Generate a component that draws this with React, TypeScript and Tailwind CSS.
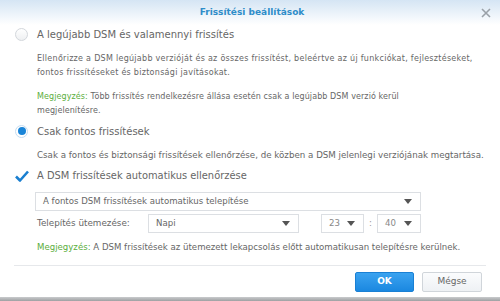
import { useState } from "react";

function Caret() {
    return (
        <svg width="8" height="5" viewBox="0 0 8 5" className="shrink-0">
            <path d="M0 0 L8 0 L4 5 Z" fill="#555" />
        </svg>
    );
}

function Select({ value, className }: { value: string; className: string }) {
    return (
        <div className={`h-[19px] flex items-center justify-between border border-[#dcdfe3] bg-white pl-[7px] pr-[8px] text-[8.6px] ${className}`}>
            <span>{value}</span>
            <Caret />
        </div>
    );
}

export default function App() {
    const [mode, setMode] = useState("important");
    const [auto, setAuto] = useState(true);

    return (
        <div className="w-[500px] h-[301px] bg-white relative overflow-hidden text-[8.8px] text-[#666] font-['DejaVu_Sans',sans-serif]">
            {/* header */}
            <div className="h-[25px] bg-gradient-to-b from-[#d5e5f4] to-white flex items-center justify-center relative pl-[4px]">
                <span className="font-bold text-[9px] text-[#2f8dc9]">Frissítési beállítások</span>
                <svg width="10" height="10" viewBox="0 0 10 10" className="absolute right-[9px] top-[8px]">
                    <path d="M1 1 L9 9 M9 1 L1 9" stroke="#9aa1a8" strokeWidth="1.6" />
                </svg>
            </div>

            <div className="pl-[15px] pr-[8px]">
                <label className="h-[18px] flex items-center gap-[9px] text-[10px]" onClick={() => setMode("all")}>
                    <span className={`w-[13px] h-[13px] rounded-full border flex items-center justify-center ${mode === "all" ? "border-[#c5dcf1] bg-white" : "border-[#d3d7dc] bg-gradient-to-b from-white to-[#eef0f2]"}`}>
                        {mode === "all" && <span className="w-[8px] h-[8px] rounded-full bg-[#1a85d8]" />}
                    </span>
                    <span>A legújabb DSM és valamennyi frissítés</span>
                </label>

                <p className="pl-[22px] mt-[9px] leading-[14px] text-[8px] tracking-[0.28px] whitespace-nowrap">
                    Ellenőrizze a DSM legújabb verzióját és az összes frissítést, beleértve az új funkciókat, fejlesztéseket,<br />
                    fontos frissítéseket és biztonsági javításokat.
                </p>

                <p className="pl-[22px] mt-[10px] leading-[14px] text-[8px] tracking-[0.09px] whitespace-nowrap">
                    <span className="text-[#5aae3c]">Megjegyzés:</span> Több frissítés rendelkezésre állása esetén csak a legújabb DSM verzió kerül<br />
                    megjelenítésre.
                </p>

                <label className="h-[18px] mt-[4px] flex items-center gap-[9px] text-[10px]" onClick={() => setMode("important")}>
                    <span className={`w-[13px] h-[13px] rounded-full border flex items-center justify-center ${mode === "important" ? "border-[#c5dcf1] bg-white" : "border-[#d3d7dc] bg-gradient-to-b from-white to-[#eef0f2]"}`}>
                        {mode === "important" && <span className="w-[8px] h-[8px] rounded-full bg-[#1a85d8]" />}
                    </span>
                    <span>Csak fontos frissítések</span>
                </label>

                <p className="pl-[22px] mt-[8px] leading-[14px] whitespace-nowrap text-[8.7px]">
                    Csak a fontos és biztonsági frissítések ellenőrzése, de közben a DSM jelenlegi verziójának megtartása.
                </p>

                <label className="h-[16px] mt-[6px] flex items-center gap-[8px] text-[9.9px]" onClick={() => setAuto(!auto)}>
                    <span className="w-[14px] h-[14px] flex items-center justify-center">
                        {auto && (
                            <svg width="14" height="12" viewBox="0 0 14 12">
                                <path d="M1 6.5 L5 10.5 L13 1.5" fill="none" stroke="#1a7fd0" strokeWidth="2.6" strokeLinejoin="round" />
                            </svg>
                        )}
                    </span>
                    <span>A DSM frissítések automatikus ellenőrzése</span>
                </label>

                <div className="pl-[20px] mt-[8px]">
                    <Select value="A fontos DSM frissítések automatikus telepítése" className="w-[386px]" />
                    <div className="flex items-center mt-[3px] h-[19px]">
                        <span className="w-[113px] pl-[2px] text-[8.8px]">Telepítés ütemezése:</span>
                        <Select value="Napi" className="w-[151px]" />
                        <Select value="23" className="w-[43px] ml-[22px] text-[#888]" />
                        <span className="w-[13px] text-center text-[#999]">:</span>
                        <Select value="40" className="w-[44px] text-[#888]" />
                    </div>
                    <p className="mt-[7px] leading-[14px] pl-[2px] whitespace-nowrap text-[8.6px]">
                        <span className="text-[#5aae3c]">Megjegyzés:</span> A DSM frissítések az ütemezett lekapcsolás előtt automatikusan telepítésre kerülnek.
                    </p>
                </div>
            </div>

            {/* footer */}
            <div className="mx-[14px] mt-[11px] border-t border-[#e6e8eb]" />
            <div className="flex justify-end gap-[8px] pr-[18px] pt-[6px]">
                <button className="w-[59px] h-[20px] rounded-[2px] bg-gradient-to-b from-[#3aa3f0] to-[#1a88e0] border border-[#1a80d4] text-white font-bold text-[9px]">OK</button>
                <button className="w-[60px] h-[20px] rounded-[2px] bg-gradient-to-b from-[#fbfcfd] to-[#eef1f4] border border-[#d0d5da] text-[#666] text-[9px]">Mégse</button>
            </div>
            <div className="absolute left-0 right-0 bottom-0 h-[4px] bg-gradient-to-b from-[#c9cbcd] to-[#9ea0a2]" />
        </div>
    );
}
